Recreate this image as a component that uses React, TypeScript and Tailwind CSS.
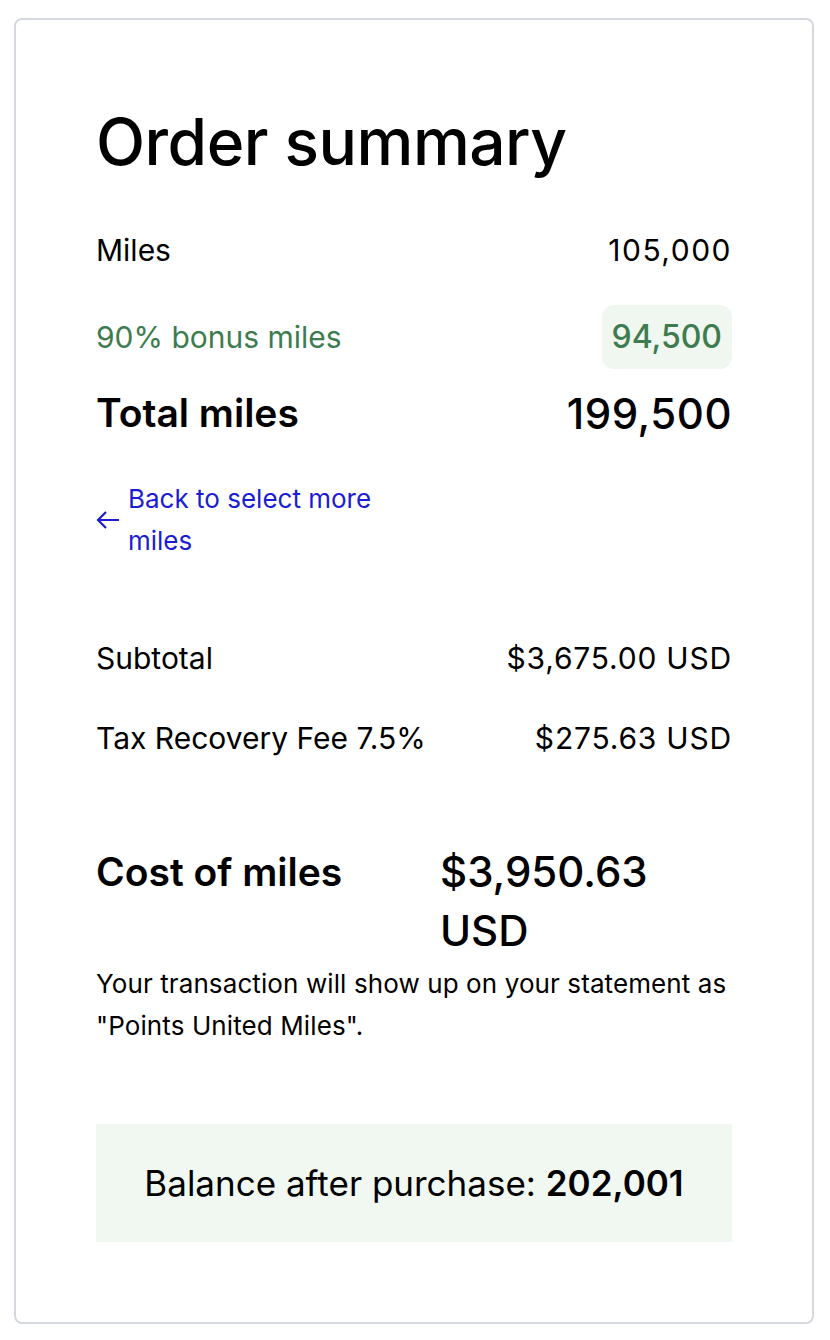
import React from "react";

export default function App() {
  return (
    <div className="min-h-[1340px] bg-white pt-[18px] px-[14px] pb-[16px]" style={{ fontFamily: "Inter, 'Noto Sans', sans-serif" }}>
      <div className="w-[800px] h-[1306px] rounded-[8px] border-2 border-[#d5d8de] bg-white px-[80px] text-black">
        <h1 className="mt-[86px] text-[64px] leading-[72px] font-medium tracking-[-0.5px]">Order summary</h1>
        <div className="mt-[50px] flex items-center justify-between h-[44px] text-[30px]">
          <span>Miles</span>
          <span className="tracking-[1.5px]">105,000</span>
        </div>
        <div className="mt-[33px] flex items-center justify-between h-[64px] text-[30px] text-[#3e7c4f]">
          <span>90% bonus miles</span>
          <span className="flex h-[64px] items-center rounded-[12px] bg-[#eff7f0] px-[10px] text-[32px] font-medium">94,500</span>
        </div>
        <div className="mt-[19px] flex items-center justify-between h-[50px]">
          <span className="text-[39px] font-semibold">Total miles</span>
          <span className="text-[42px] font-medium tracking-[0.5px]">199,500</span>
        </div>
        <a className="mt-[40px] flex items-center gap-[8px] text-[#1c1cd4] text-[26px] leading-[42px] w-[300px]" href="#">
          <svg width="24" height="20" viewBox="0 0 24 20" fill="none" stroke="currentColor" strokeWidth="2.2" className="shrink-0">
            <path d="M23 10H2M10 2L2 10l8 8" />
          </svg>
          <span>Back to select more miles</span>
        </a>
        <div className="mt-[74px] flex items-center justify-between h-[44px] text-[30px]">
          <span>Subtotal</span>
          <span className="tracking-[0.8px]">$3,675.00 USD</span>
        </div>
        <div className="mt-[36px] flex items-center justify-between h-[44px] text-[30px]">
          <span>Tax Recovery Fee 7.5%</span>
          <span className="tracking-[0.8px]">$275.63 USD</span>
        </div>
        <div className="mt-[82px] flex">
          <span className="w-[344px] text-[39px] leading-[59px] font-semibold">Cost of miles</span>
          <span className="w-[250px] text-[42px] leading-[59px] font-medium">$3,950.63 USD</span>
        </div>
        <p className="mt-[3px] text-[26px] leading-[42px] tracking-[0.1px]">Your transaction will show up on your statement as "Points United Miles".</p>
        <div className="mt-[77px] flex h-[118px] items-center justify-center bg-[#f1f8f2] text-[35px]">
          <span>Balance after purchase: <span className="font-semibold">202,001</span></span>
        </div>
      </div>
    </div>
  );
}
